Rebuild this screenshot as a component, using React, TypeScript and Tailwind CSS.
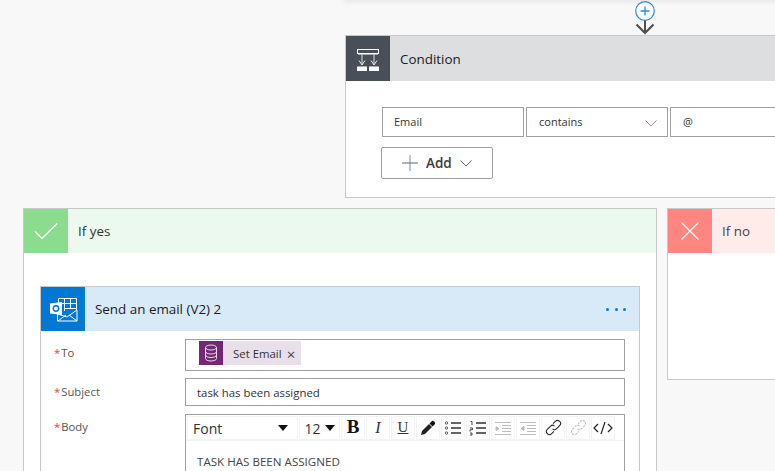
import React from "react";

const F = "font-['Open_Sans','Noto_Sans',sans-serif]";

function Plus() {
  return (
    <svg width="22" height="36" viewBox="0 0 22 36" className="block">
      <circle cx="11" cy="11" r="9.3" fill="#fff" stroke="#2a8ae0" strokeWidth="1.2" />
      <path d="M11 6.500V15.500M6.500 11H15.500" stroke="#2a8ae0" strokeWidth="1.3" />
      <path d="M11 20.500V33" stroke="#505050" strokeWidth="2" />
      <path d="M2.500 24.500L11 33L19.500 24.500" fill="none" stroke="#505050" strokeWidth="2.2" />
    </svg>
  );
}

function ConditionIcon() {
  return (
    <svg width="24" height="24" viewBox="0 0 24 24" fill="none">
      <rect x="1.500" y="2.500" width="21" height="4" stroke="#fff" strokeWidth="1" />
      <path d="M2 7.500H22" stroke="#a9adb2" strokeWidth="1" />
      <path d="M6 7V18M18 7V18" stroke="#c4c7cb" strokeWidth="1.200" />
      <path d="M3 13.500L6 18L9 13.500M15 13.500L18 18L21 13.500" stroke="#e6e7e9" strokeWidth="1" />
      <path d="M1 19.500H11V24H1ZM13 19.500H23V24H13Z" fill="#fff" />
    </svg>
  );
}

function OutlookIcon() {
  return (
    <svg width="29" height="25" viewBox="0 0 29 25" fill="none">
      <path d="M9.500 1.500H27.500V13" stroke="#fff" strokeWidth="1" />
      <path d="M9.500 1.500V6M15.500 1.500V14M21.500 1.500V12M9.500 6.500H27.500M15.500 11.500H27.500" stroke="#fff" strokeWidth="1" />
      <path d="M8.500 17V24H28V13L18 20L8.500 17" stroke="#fff" strokeWidth="1" />
      <path d="M9 24L17 18M28 24L20 18" stroke="#fff" strokeWidth="1" />
      <path d="M1 6.500L13 5V18L1 16.500Z" fill="#fff" />
      <circle cx="7" cy="11.500" r="2.700" stroke="#0078d4" strokeWidth="1.500" />
    </svg>
  );
}

function Db() {
  return (
    <svg width="14" height="18" viewBox="0 0 14 18" fill="none" stroke="#e8d9e8" strokeWidth="1">
      <ellipse cx="7" cy="3.500" rx="5.500" ry="2.500" />
      <path d="M1.500 3.500V14.500C1.500 16 4 17 7 17S12.500 16 12.500 14.500V3.500M1.500 7.500C1.500 9 4 10 7 10S12.500 9 12.500 7.500M1.500 11C1.500 12.500 4 13.500 7 13.500S12.500 12.500 12.500 11" />
    </svg>
  );
}

function Tool({ children, w = "w-[24px]" }: { children: React.ReactNode; w?: string }) {
  return <div className={`${w} h-[24px] flex items-center justify-center shrink-0 bg-white border border-[#f4f4f4]`}>{children}</div>;
}

function Lines({ kind }: { kind: string }) {
  const c = kind.startsWith("indent") ? "#bcbcbc" : "#333";
  return (
    <svg width="18" height="16" viewBox="0 0 18 16" fill="none" stroke={c} strokeWidth="1">
      {kind === "ul" && (
        <>
          <circle cx="2.500" cy="3" r="1.200" strokeWidth="0.800" />
          <circle cx="2.500" cy="8" r="1.200" strokeWidth="0.800" />
          <circle cx="2.500" cy="13" r="1.200" strokeWidth="0.800" />
          <path d="M7 3H17M7 8H17M7 13H17" strokeWidth="1.300" />
        </>
      )}
      {kind === "ol" && (
        <>
          <path d="M1.500 1.500H3V5M1 8H3.500V9.800H1V11.500M1 13H3V15H1" strokeWidth="0.900" />
          <path d="M7 3H17M7 8H17M7 13H17" strokeWidth="1.300" />
        </>
      )}
      {kind === "indentR" && (
        <>
          <path d="M1 2.500H17M8 5.500H17M8 8.500H17M8 11.500H17M1 14.500H17" />
          <path d="M2 6.500L5 8.500L2 10.500Z" fill={c} />
        </>
      )}
      {kind === "indentL" && (
        <>
          <path d="M1 2.500H17M8 5.500H17M8 8.500H17M8 11.500H17M1 14.500H17" />
          <path d="M5 6.500L2 8.500L5 10.500Z" fill={c} />
        </>
      )}
    </svg>
  );
}

function LinkIcon({ off }: { off?: boolean }) {
  const c = off ? "#c0c0c0" : "#2c2c2c";
  return (
    <svg width="17" height="17" viewBox="0 0 18 18" fill="none" stroke={c} strokeWidth="1.200" strokeDasharray={off ? "2.500 1" : undefined}>
      <path d="M8 10.500C9.500 12 11 11.500 12 10.500L15.500 7C17 5.500 16.500 3.500 15.500 2.500C14.500 1.500 12.500 1 11 2.500L8.500 5" />
      <path d="M10 7.500C8.500 6 7 6.500 6 7.500L2.500 11C1 12.500 1.500 14.500 2.500 15.500C3.500 16.500 5.500 17 7 15.500L9.500 13" />
    </svg>
  );
}

function Label({ name, pt }: { name: string; pt: string }) {
  return (
    <div className={`w-[131px] text-[#555] text-[11.300px] ${pt}`}>
      <span className="text-[#e04040] mr-[1px]">*</span>
      {name}
    </div>
  );
}

export default function App() {
  return (
    <div className={`${F} w-[775px] h-[471px] overflow-hidden bg-[#f8f8f8] text-[#212121] flex flex-col`}>
      <div className="ml-[345px] w-[500px] h-0 shadow-[0_0_5px_1px_rgba(0,0,0,0.16)]" />
      <div className="h-[35px] shrink-0 pl-[634px]">
        <Plus />
      </div>

      <div className="ml-[345px] w-[600px] h-[163px] shrink-0 bg-white border border-[#c8c8c8]">
        <div className="h-[45px] flex bg-[#dcdee0]">
          <div className="w-[44px] h-[45px] bg-[#484f58] flex items-center justify-center">
            <ConditionIcon />
          </div>
          <div className="pl-[10px] pt-[1px] flex items-center text-[13.400px] text-[#1a1a1a]">Condition</div>
        </div>
        <div className="pl-[36px] pt-[26px]">
          <div className="flex gap-[2px] text-[11px] text-[#333]">
            <div className="w-[142px] h-[30px] border border-[#a0a0a0] flex items-center pl-[11px]">Email</div>
            <div className="w-[142px] h-[30px] border border-[#a0a0a0] flex items-center justify-between pl-[12px] pr-[10px]">
              <span className="pt-[1px]">contains</span>
              <svg width="12" height="7" viewBox="0 0 12 7" fill="none" className="mt-[2px]"><path d="M0.500 0.500L6 6L11.500 0.500" stroke="#b08a80" /></svg>
            </div>
            <div className="w-[140px] h-[30px] border border-[#a0a0a0] flex items-center pl-[12px]">@</div>
          </div>
          <div className="mt-[10px] w-[112px] h-[32px] border border-[#a0a0a0] rounded-[2px] flex items-center pl-[20px] -ml-px text-[#3a3a3a]">
            <svg width="16" height="16" viewBox="0 0 16 16" fill="none"><path d="M8 0V16" stroke="#6a92b8" /><path d="M0 8H16" stroke="#666" /></svg>
            <span className="ml-[8px] text-[13.500px] font-semibold">Add</span>
            <svg width="12" height="7" viewBox="0 0 12 7" fill="none" className="ml-[8px]"><path d="M0.500 0.500L6 6L11.500 0.500" stroke="#666" /></svg>
          </div>
        </div>
      </div>

      <div className="mt-[10px] pl-[23px] flex gap-[10px] items-start">
        <div className="w-[634px] shrink-0 bg-white border border-[#c8c8c8] h-[400px]">
          <div className="h-[44px] flex bg-[#ebf9ee]">
            <div className="w-[44px] h-[44px] bg-[#8bdc8f] flex items-center justify-center">
              <svg width="24" height="18" viewBox="0 0 24 18" fill="none"><path d="M1 9.500L8 16.500L23 1.500" stroke="#fff" strokeWidth="1.400" /></svg>
            </div>
            <div className="pl-[10px] pt-[1px] flex items-center text-[13.400px] text-[#333]">If yes</div>
          </div>
          <div className="ml-[16px] mt-[33px] w-[600px] border border-[#c8c8c8] h-[300px]">
            <div className="h-[44px] flex bg-[#d8e9f8]">
              <div className="w-[44px] h-[44px] bg-[#0078d4] flex items-center justify-center">
                <OutlookIcon />
              </div>
              <div className="pl-[10px] pt-[1px] flex-1 flex items-center text-[13.400px] text-[#1a1a1a]">Send an email (V2) 2</div>
              <div className="flex gap-[5.500px] items-center pr-[13px]">
                <i className="w-[3px] h-[3px] rounded-full bg-[#0078d4]" />
                <i className="w-[3px] h-[3px] rounded-full bg-[#0078d4]" />
                <i className="w-[3px] h-[3px] rounded-full bg-[#0078d4]" />
              </div>
            </div>
            <div className="pl-[13px] pt-[8px] text-[11.400px]">
              <div className="flex h-[32px]">
                <Label name="To" pt="pt-[6px]" />
                <div className="w-[440px] h-[32px] border border-[#a0a0a0] pl-[13px] pt-[1px]">
                  <div className="w-[102px] h-[24px] bg-[#e9dfea] flex items-center text-[#333]">
                    <div className="w-[24px] h-[24px] bg-[#742774] flex items-center justify-center"><Db /></div>
                    <span className="ml-[10px] pt-[2px]">Set Email</span>
                    <span className="ml-[5px] pt-[2px] text-[15px] leading-none text-[#444]">×</span>
                  </div>
                </div>
              </div>
              <div className="flex mt-[7px] h-[28px]">
                <Label name="Subject" pt="pt-[6px]" />
                <div className="w-[440px] h-[28px] border border-[#a0a0a0] pl-[11px] pt-[2px] flex items-center text-[#333]">task has been assigned</div>
              </div>
              <div className="flex mt-[8px]">
                <Label name="Body" pt="pt-[5px]" />
                <div className="w-[440px] h-[100px] border border-[#a0a0a0]">
                  <div className="flex items-center h-[26px] pl-[1px] border-b border-[#f2f2f2] text-[#333] gap-[1px]">
                    <Tool w="w-[111px]">
                      <div className="flex w-full items-center justify-between pl-[5px] pr-[9px] pt-[1px] text-[14px]">
                        <span>Font</span>
                        <i className="w-0 h-0 border-x-[5.500px] border-x-transparent border-t-[6px] border-t-[#111]" />
                      </div>
                    </Tool>
                    <Tool w="w-[41px]">
                      <div className="flex items-center gap-[4px] pt-[1px] text-[14px]">
                        <span>12</span>
                        <i className="w-0 h-0 border-x-[5.500px] border-x-transparent border-t-[6px] border-t-[#111]" />
                      </div>
                    </Tool>
                    <Tool><span className="font-['Liberation_Serif',serif] font-bold text-[19px] text-[#111]">B</span></Tool>
                    <Tool><span className="font-['Liberation_Serif',serif] italic text-[16px]">I</span></Tool>
                    <Tool><span className="font-['Liberation_Serif',serif] underline text-[15px]">U</span></Tool>
                    <Tool>
                      <svg width="16" height="16" viewBox="0 0 16 16"><path d="M1 15L2 11L9 4L12 7L5 14Z" fill="#222" /><path d="M9.500 3.500L12 1C13 0 16 3 15 4L12.500 6.500Z" fill="#111" /></svg>
                    </Tool>
                    <Tool><Lines kind="ul" /></Tool>
                    <Tool><Lines kind="ol" /></Tool>
                    <Tool><Lines kind="indentR" /></Tool>
                    <Tool><Lines kind="indentL" /></Tool>
                    <Tool><LinkIcon /></Tool>
                    <Tool><LinkIcon off /></Tool>
                    <Tool>
                      <svg width="20" height="14" viewBox="0 0 20 14" fill="none" stroke="#222" strokeWidth="1.200"><path d="M5 3L1 7L5 11M15 3L19 7L15 11M12 1L8 13" /></svg>
                    </Tool>
                  </div>
                  <div className="pl-[11px] pt-[12px] text-[#444] text-[11.600px]">TASK HAS BEEN ASSIGNED</div>
                </div>
              </div>
            </div>
          </div>
        </div>
        <div className="w-[200px] shrink-0 h-[172px] bg-white border border-[#c8c8c8]">
          <div className="h-[44px] flex bg-[#ffebe9]">
            <div className="w-[44px] h-[44px] bg-[#ff8680] flex items-center justify-center">
              <svg width="18" height="18" viewBox="0 0 18 18" fill="none"><path d="M0.500 0.500L17.500 17.500M17.500 0.500L0.500 17.500" stroke="#fff" strokeWidth="1.200" /></svg>
            </div>
            <div className="pl-[10px] pt-[1px] flex items-center text-[13.400px] text-[#444]">If no</div>
          </div>
        </div>
      </div>
    </div>
  );
}
